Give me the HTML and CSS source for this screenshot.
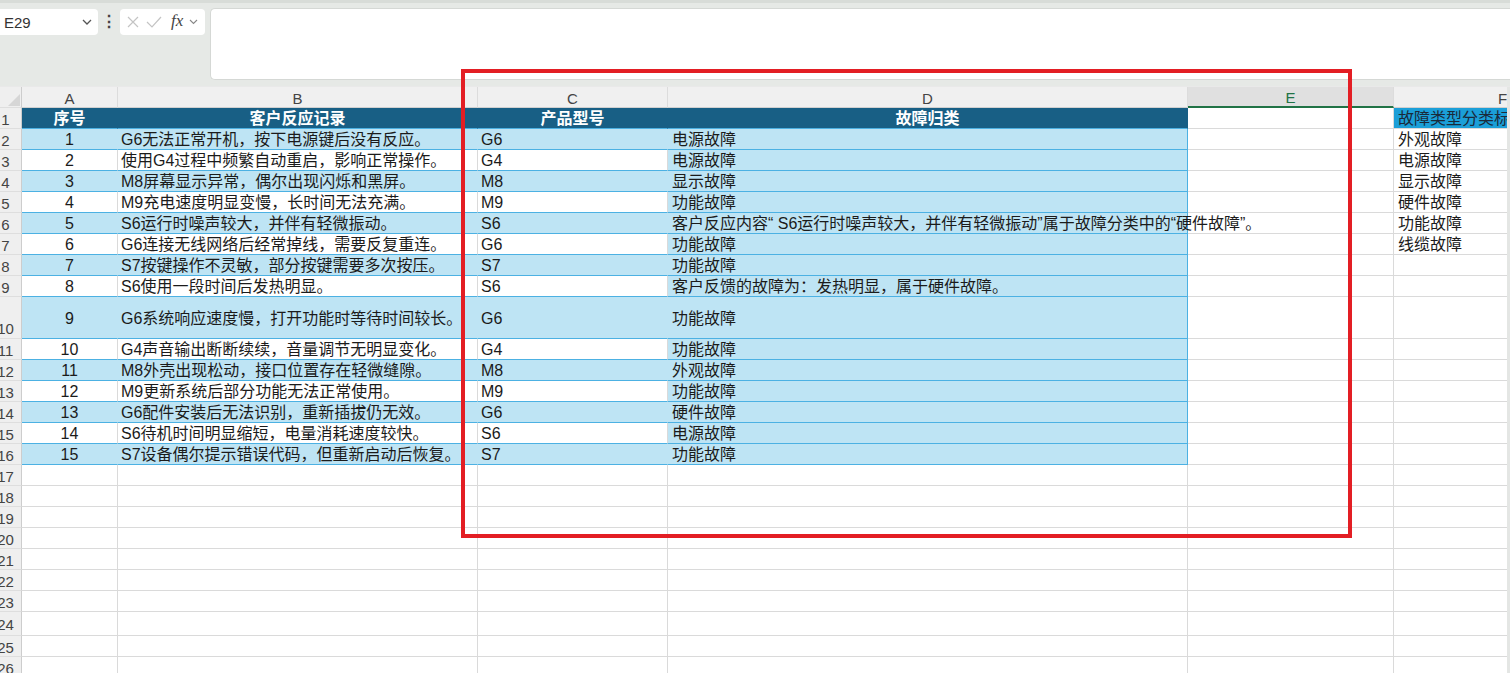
FILE: index.html
```html
<!DOCTYPE html>
<html lang="zh-CN">
<head>
  <meta charset="UTF-8">
  <meta name="viewport" content="width=device-width, initial-scale=1.0">
  <title>故障归类</title>
  <link rel="stylesheet" href="styles.css">
</head>
<body>
  <div class="app">
    <div class="formula-area">
      <div class="name-box">
        <span>E29</span>
        <svg class="chevron" width="10" height="6" viewBox="0 0 10 6"><polyline points="1,1 5,5 9,1" fill="none" stroke="#555" stroke-width="1.3"/></svg>
      </div>
      <div class="more-dots">⋮</div>
      <div class="fx-box">
        <svg width="14" height="14" viewBox="0 0 14 14"><path d="M2 2 L12 12 M12 2 L2 12" stroke="#c4c4c4" stroke-width="1.2"/></svg>
        <svg width="16" height="14" viewBox="0 0 16 14"><polyline points="1,7 6,12 15,2" fill="none" stroke="#c4c4c4" stroke-width="1.2"/></svg>
        <span class="fx">fx</span>
        <svg class="chevron" width="9" height="6" viewBox="0 0 9 6"><polyline points="1,1 4.5,4.5 8,1" fill="none" stroke="#888" stroke-width="1.1"/></svg>
      </div>
      <div class="formula-input"></div>
    </div>

    <div class="sheet">
      <div class="grid" id="grid"></div>
    </div>

    <!-- annotation frame drawn over the sheet -->
    <div class="mark-box"></div>
  </div>

  <script>
    const records = [
      [1, 'G6无法正常开机，按下电源键后没有反应。', 'G6', '电源故障'],
      [2, '使用G4过程中频繁自动重启，影响正常操作。', 'G4', '电源故障'],
      [3, 'M8屏幕显示异常，偶尔出现闪烁和黑屏。', 'M8', '显示故障'],
      [4, 'M9充电速度明显变慢，长时间无法充满。', 'M9', '功能故障'],
      [5, 'S6运行时噪声较大，并伴有轻微振动。', 'S6', '客户反应内容“ S6运行时噪声较大，并伴有轻微振动”属于故障分类中的“硬件故障”。'],
      [6, 'G6连接无线网络后经常掉线，需要反复重连。', 'G6', '功能故障'],
      [7, 'S7按键操作不灵敏，部分按键需要多次按压。', 'S7', '功能故障'],
      [8, 'S6使用一段时间后发热明显。', 'S6', '客户反馈的故障为：发热明显，属于硬件故障。'],
      [9, 'G6系统响应速度慢，打开功能时等待时间较长。', 'G6', '功能故障'],
      [10, 'G4声音输出断断续续，音量调节无明显变化。', 'G4', '功能故障'],
      [11, 'M8外壳出现松动，接口位置存在轻微缝隙。', 'M8', '外观故障'],
      [12, 'M9更新系统后部分功能无法正常使用。', 'M9', '功能故障'],
      [13, 'G6配件安装后无法识别，重新插拔仍无效。', 'G6', '硬件故障'],
      [14, 'S6待机时间明显缩短，电量消耗速度较快。', 'S6', '电源故障'],
      [15, 'S7设备偶尔提示错误代码，但重新启动后恢复。', 'S7', '功能故障']
    ];
    const categories = ['外观故障', '电源故障', '显示故障', '硬件故障', '功能故障', '线缆故障'];

    function cell(cls, text) {
      return `<div class="cell ${cls}">${text || ''}</div>`;
    }

    function row(num, cells, extra) {
      return `<div class="row ${extra || ''}"><div class="rh">${num}</div>${cells.join('')}</div>`;
    }

    let html = `
      <div class="row col-head">
        <div class="corner"><svg width="12" height="12" viewBox="0 0 12 12"><polygon points="12,0 12,12 0,12" fill="#d6d6d6"/></svg></div>
        <div class="ch a">A</div>
        <div class="ch b">B</div>
        <div class="ch c">C</div>
        <div class="ch d">D</div>
        <div class="ch e sel">E</div>
        <div class="ch f">F</div>
      </div>`;

    // header row of the table
    html += row(1, [
      cell('a head', '序号'),
      cell('b head', '客户反应记录'),
      cell('c head', '产品型号'),
      cell('d head', '故障归类'),
      cell('e'),
      cell('f cat-head', '故障类型分类标准')
    ]);

    records.forEach((r, i) => {
      const band = i % 2 === 0 ? ' band' : '';
      html += row(i + 2, [
        cell('a tbl num' + band, r[0]),
        cell('b tbl' + band, r[1]),
        cell('c tbl' + band, r[2]),
        cell('d tbl band', r[3]),
        cell('e'),
        cell('f', categories[i])
      ], i === 8 ? 'tall' : '');
    });

    // empty rows below the table
    for (let n = 17; n <= 26; n++) {
      html += row(n, [cell('a'), cell('b'), cell('c'), cell('d'), cell('e'), cell('f')], n === 24 ? 'mid' : '');
    }

    document.getElementById('grid').innerHTML = html;
  </script>
</body>
</html>
```

FILE: styles.css
```css
* {
  box-sizing: border-box;
}
body {
  margin: 0;
  font-family: "Liberation Sans", "Noto Sans CJK SC", sans-serif;
  background-color: #fff;
  color: #1b1b1b;
  overflow: hidden;
}
.app {
  position: relative;
  width: 1510px;
  height: 673px;
  overflow: hidden;
}

/* formula bar */
.formula-area {
  height: 87px;
  background-color: #e6e9e6;
  border-top: 3px solid #d8dcd8;
  border-bottom: 1px solid #e9e9e9;
  padding-top: 6px;
  display: flex;
  align-items: flex-start;
}
.name-box {
  width: 104px;
  height: 26px;
  margin-left: -6px;
  padding: 0 6px 0 10px;
  background-color: #fff;
  border-radius: 4px;
  display: flex;
  align-items: center;
  justify-content: space-between;
  font-size: 15px;
  color: #333;
}
.more-dots {
  width: 22px;
  height: 26px;
  line-height: 26px;
  text-align: center;
  font-size: 16px;
  font-weight: bold;
  color: #444;
}
.fx-box {
  width: 85px;
  height: 26px;
  background-color: #fff;
  border-radius: 4px;
  display: flex;
  align-items: center;
  gap: 6px;
  padding-left: 6px;
}
.fx {
  font-family: "Liberation Serif", serif;
  font-style: italic;
  font-size: 17px;
  color: #444;
  margin-left: 3px;
  margin-top: -2px;
}
.formula-input {
  flex: 1;
  height: 72px;
  margin-left: 5px;
  margin-top: -1px;
  background-color: #fff;
  border: 1px solid #d5d8d5;
  border-right: none;
  border-radius: 5px 0 0 5px;
}

/* sheet grid */
.sheet {
  width: 1510px;
  height: 586px;
  overflow: hidden;
  border-right: 3px solid #e4e6e4;
}
.grid {
  width: 1612px;
}
.row {
  display: flex;
  height: 21px;
}
.row.tall {
  height: 42px;
}
.row.mid {
  height: 24px;
}
.rh, .corner {
  width: 22px;
  flex: 0 0 22px;
  background-color: #efefef;
  border-right: 1px solid #cdcdcd;
  border-bottom: 1px solid #dedede;
  padding: 2px 10px 0 0;
  font-size: 15px;
  color: #444;
  display: flex;
  align-items: center;
  justify-content: center;
  white-space: nowrap;
}
.row.tall .rh {
  align-items: flex-end;
  padding-bottom: 1px;
}
.corner {
  padding: 0 1px 1px 0;
  align-items: flex-end;
  justify-content: flex-end;
}
.a { flex: 0 0 96px; }
.b { flex: 0 0 360px; }
.c { flex: 0 0 190px; }
.d { flex: 0 0 520px; }
.e { flex: 0 0 206px; }
.f { flex: 0 0 218px; }

.col-head {
  background-color: #f0f0f0;
}
.ch {
  background-color: #f0f0f0;
  border-right: 1px solid #dcdcdc;
  border-bottom: 1px solid #d0d0d0;
  padding-top: 2px;
  font-size: 15px;
  color: #444;
  display: flex;
  align-items: center;
  justify-content: center;
}
.ch.sel {
  background-color: #e0e0e0;
  color: #217346;
  border-bottom: 2px solid #217346;
}

.cell {
  min-width: 0;
  border-right: 1px solid #dadada;
  border-bottom: 1px solid #dadada;
  font-size: 16px;
  line-height: 20px;
  display: flex;
  align-items: center;
  padding: 2px 0 0 3px;
  white-space: nowrap;
}
.cell.d {
  padding-left: 4px;
  position: relative;
  z-index: 1;
}
.cell.f {
  padding-left: 4px;
}
.cell.num {
  justify-content: center;
  padding-left: 0;
}

/* table styling */
.cell.head {
  background-color: #185f85;
  color: #fff;
  font-weight: bold;
  justify-content: center;
  padding-left: 0;
  border-right: 1px solid #185f85;
  border-bottom: 1px solid #4cb1e3;
}
.cell.tbl {
  border-bottom: 1px solid #4cb1e3;
}
.cell.band {
  background-color: #bee4f4;
  border-right-color: transparent;
}
.cell.d.tbl {
  border-right: 1px solid #4cb1e3;
}
.cat-head {
  background-color: #1b9fd8;
  color: #1a2a3a;
}

/* red annotation frame */
.mark-box {
  position: absolute;
  left: 461px;
  top: 69px;
  width: 891px;
  height: 469px;
  border: 4px solid #e31e24;
  z-index: 5;
}
```
